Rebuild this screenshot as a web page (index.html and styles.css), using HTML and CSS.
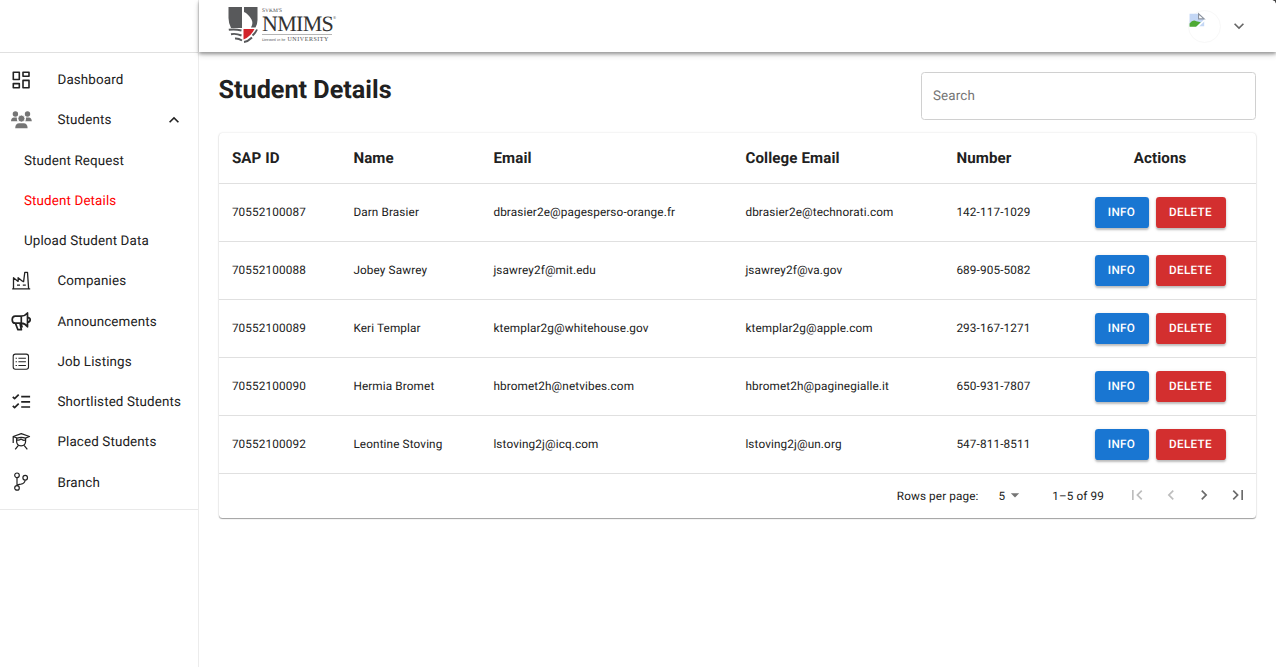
FILE: index.html
```
<!DOCTYPE html>
<html lang="en">
<head>
<meta charset="utf-8">
<title>Student Details</title>
<link rel="stylesheet" href="styles.css">
</head>
<body>
<div class="app">
  <aside class="sidebar">
    <div class="sidebar-head"></div>
    <nav class="nav">
      <a class="nav-item"><svg class="icon" viewBox="0 0 24 24" stroke-width="1.6"><path d="M4.3 4.2h6v7.3h-6zM14 4.2h6v4.1h-6zM4.3 15.6h6v4.1h-6zM14 12.4h6v7.3h-6z"/></svg><span>Dashboard</span></a>
      <a class="nav-item"><svg class="icon icon-grey" viewBox="0 0 24 24"><circle cx="6.4" cy="6" r="2.7"/><circle cx="18.5" cy="6" r="2.7"/><path d="M2 13.3c0-2.500 1.200-3.800 3-3.800h2.800c.2 1.700-.1 2.800.8 3.800zM22.800 13.300c0-2.500-1.200-3.800-3-3.800H17c-.2 1.700.1 2.800-.8 3.800z"/><circle cx="12.4" cy="10.6" r="3.5" stroke="#fff" stroke-width=".8"/><path d="M6.200 20.300c0-3.300 1.600-5 4-5h4.400c2.400 0 4 1.700 4 5z"/></svg><span>Students</span><svg class="expand" viewBox="0 0 24 24"><path d="M12 8l-6 6 1.41 1.41L12 10.83l4.59 4.58L18 14z"/></svg></a>
      <a class="nav-item nav-sub"><span>Student Request</span></a>
      <a class="nav-item nav-sub nav-active"><span>Student Details</span></a>
      <a class="nav-item nav-sub"><span>Upload Student Data</span></a>
      <a class="nav-item"><svg class="icon" viewBox="0 0 24 24" stroke-width="1.3"><path d="M3.200 19.800h18M4.500 19.500V8.700l4.600 3.700V8.700l4.700 3.900M13.800 12.600h.8l1.200-9.200h2.700l1.100 16.100M8 16.200h3M13.800 16.200h3"/></svg><span>Companies</span></a>
      <a class="nav-item"><svg class="icon" viewBox="0 0 24 24" stroke-width="1.7"><path d="M12.300 7.200H6.200Q3.200 7.200 3.200 10.700T6.200 14.200h6.100zM12.300 7.200Q16 7 18.500 4v13.800q-2.500-3.400-6.200-3.600M18.800 8.300q2.400.5 2.400 2.500t-2.400 2.500M6.500 14.400l2.400 6.300h3.500l-1.400-6.300M12 14.400l1.200 4.200"/></svg><span>Announcements</span></a>
      <a class="nav-item"><svg class="icon" viewBox="0 0 24 24" stroke-width="1.1"><rect x="4.200" y="4.100" width="15.300" height="15.200" rx="2.200"/><path d="M9.400 8.200h7.500M9.400 11.800h7.500M9.400 15.500h7.500"/><path d="M6.600 8.200h1.300M6.600 11.800h1.300M6.600 15.500h1.300"/></svg><span>Job Listings</span></a>
      <a class="nav-item"><svg class="icon" viewBox="0 0 24 24" stroke-width="1.7"><path d="M12.200 6.600h8.900M12.200 11.800h8.900M12.200 17h8.900M3.800 6.800l1.800 1.800 4.100-4M3.800 15.800l1.800 1.800 4.100-4"/></svg><span>Shortlisted Students</span></a>
      <a class="nav-item"><svg class="icon" viewBox="0 0 24 24" stroke-width="1.250"><path d="M4.200 13V6.500L12.300 3.600l8.200 2.900-4.100 1.600q-4.100-1.400-8.200 0L4.200 6.500M7.600 8.100v3.200q0 4.400 4.500 4.600 4.500-.2 4.500-4.600V8.100M8 9.900q2 .8 4-.8 2.300 1.800 4.600.8M6.200 19.400l3-3.700M18.300 19.400l-3-3.700"/></svg><span>Placed Students</span></a>
      <a class="nav-item"><svg class="icon" viewBox="0 0 24 24" stroke-width="1.200"><circle cx="8" cy="5.300" r="2.300"/><circle cx="8" cy="17.900" r="2.300"/><circle cx="16.200" cy="7.700" r="2.300"/><path d="M8 7.600v8M16.200 10q-.6 3.800-4.300 4.200-3.500.2-3.900 1.800"/></svg><span>Branch</span></a>
    </nav>
  </aside>
  <div class="page">
    <header class="topbar">
      <div class="logo">
        <svg class="crest" viewBox="0 0 32 38"><path d="M1.500 1H15v21H4Q1.500 17 1.500 12z" fill="#58595b"/><path d="M17 1h13.500v13q0 4-2 7.500h-4.500q2.500-4 .5-8Q21 7.500 17 6z" fill="#58595b"/><path d="M16.500 23H27.500q-3.500 7.500-11 10.500z" fill="#d2232a"/><path d="M1.800 23.800q6-1 12.700.7M4 28.200q5-1 10.500 1.300M8 32.500q3.500-.3 7 2M17 36q4-.5 8-4.500M25.500 29.500q3-2.500 4.500-6" fill="none" stroke="#58595b" stroke-width="1.900"/></svg>
        <div class="wordmark"><span class="logo-top">SVKM'S</span><span class="logo-name">NMIMS<sup class="logo-reg">®</sup></span><span class="logo-tag"><small class="logo-deemed">Deemed to be</small> UNIVERSITY</span></div>
      </div>
      <div class="account">
        <div class="avatar"><svg class="broken" viewBox="0 0 16 16"><path d="M.5 2.500h8l5 5v6H.5z" fill="#c4d7f5"/><path d="M8.500 2.500v4.500h5z" fill="#fff" stroke="#8b93a0"/><path d="M.5 14V11q3-4 6-2l4 1-4 4z" fill="#4eaa35"/><path d="M7 14.500l7-6.500" stroke="#fff" stroke-width="1.500"/></svg></div>
        <svg class="chevron" viewBox="0 0 24 24"><path d="M7.410 8.590L12 13.170l4.590-4.580L18 10l-6 6-6-6z"/></svg>
      </div>
      <i class="corner"></i>
    </header>
    <main class="content">
      <div class="heading"><h1 class="title">Student Details</h1><input class="search" type="text" placeholder="Search"></div>
      <section class="card">
        <div class="row row-head"><span>SAP ID</span><span>Name</span><span>Email</span><span>College Email</span><span>Number</span><span class="actions">Actions</span></div>
        <div class="row"><span>70552100087</span><span>Darn Brasier</span><span>dbrasier2e@pagesperso-orange.fr</span><span>dbrasier2e@technorati.com</span><span>142-117-1029</span><span class="actions"><button class="btn info">INFO</button><button class="btn delete">DELETE</button></span></div>
        <div class="row"><span>70552100088</span><span>Jobey Sawrey</span><span>jsawrey2f@mit.edu</span><span>jsawrey2f@va.gov</span><span>689-905-5082</span><span class="actions"><button class="btn info">INFO</button><button class="btn delete">DELETE</button></span></div>
        <div class="row"><span>70552100089</span><span>Keri Templar</span><span>ktemplar2g@whitehouse.gov</span><span>ktemplar2g@apple.com</span><span>293-167-1271</span><span class="actions"><button class="btn info">INFO</button><button class="btn delete">DELETE</button></span></div>
        <div class="row"><span>70552100090</span><span>Hermia Bromet</span><span>hbromet2h@netvibes.com</span><span>hbromet2h@paginegialle.it</span><span>650-931-7807</span><span class="actions"><button class="btn info">INFO</button><button class="btn delete">DELETE</button></span></div>
        <div class="row"><span>70552100092</span><span>Leontine Stoving</span><span>lstoving2j@icq.com</span><span>lstoving2j@un.org</span><span>547-811-8511</span><span class="actions"><button class="btn info">INFO</button><button class="btn delete">DELETE</button></span></div>
        <div class="pager">
          <span class="per-page">Rows per page:</span><span class="size">5</span><svg class="caret" viewBox="0 0 24 24"><path d="M7 10l5 5 5-5z"/></svg><span class="range">1–5 of 99</span>
          <svg class="page-btn off" viewBox="0 0 24 24"><path d="M18.410 16.590L13.820 12l4.590-4.590L17 6l-6 6 6 6zM6 6h2v12H6z"/></svg>
          <svg class="page-btn off" viewBox="0 0 24 24"><path d="M15.410 7.410L14 6l-6 6 6 6 1.410-1.410L10.830 12z"/></svg>
          <svg class="page-btn" viewBox="0 0 24 24"><path d="M8.590 16.590L13.170 12 8.590 7.410 10 6l6 6-6 6z"/></svg>
          <svg class="page-btn" viewBox="0 0 24 24"><path d="M5.590 7.410L10.180 12l-4.590 4.590L7 18l6-6-6-6zM16 6h2v12h-2z"/></svg>
        </div>
      </section>
    </main>
  </div>
</div>
</body>
</html>
```

FILE: styles.css
```
* { box-sizing: border-box; }
body { margin: 0; font-family: Roboto, "Liberation Sans", sans-serif; color: #212121; background: #fff; text-rendering: geometricPrecision; }
.app { display: flex; height: 667px; overflow: hidden; }
.sidebar { width: 198.5px; flex: none; border-right: 1px solid #ececec; }
.sidebar-head { height: 53px; border-bottom: 1px solid #e0e0e0; }
.nav { padding: 6.7px 0; border-bottom: 1px solid #e9e9e9; }
.nav-item { display: flex; align-items: center; height: 40.25px; padding-left: 9px; font-size: 13.4px; letter-spacing: .126px; white-space: nowrap; }
.nav-item > span { padding-top: 1.4px; }
.nav-sub { padding-left: 24px; }
.nav-active { color: #f00; }
.icon { width: 24px; height: 24px; margin-right: 24.5px; flex: none; fill: none; stroke: #222; stroke-linejoin: round; }
.icon-grey { fill: #757575; stroke: none; }
.expand { width: 20px; height: 20px; margin-left: auto; margin-right: 13.5px; fill: #222; }
.page { flex: 1; min-width: 0; }
.topbar { position: relative; display: flex; justify-content: space-between; height: 52px; padding: 0 27px 0 28.5px; box-shadow: 0 2px 3px rgba(0,0,0,.3), 0 3px 6px rgba(0,0,0,.16); }
.logo { display: flex; gap: 3px; padding-top: 6px; }
.crest { width: 32px; height: 38px; }
.wordmark { display: flex; flex-direction: column; padding-top: 2px; font-family: "Liberation Serif", serif; color: #4d4d4f; white-space: nowrap; }
.logo-top { font-size: 5.5px; line-height: 6px; }
.logo-name { display: flex; font-size: 22px; line-height: 20px; color: #333; letter-spacing: -.7px; border-bottom: 1px solid #b5b5b5; height: 21px; width: 70px; }
.logo-reg { font-size: 4px; line-height: 8px; }
.logo-tag { margin-top: 1px; font-size: 6px; line-height: 7px; letter-spacing: .55px; }
.logo-deemed { font-size: 4px; letter-spacing: .1px; }
.account { display: flex; align-items: center; gap: 8px; }
.avatar { width: 33px; height: 33px; border-radius: 50%; border: 1px solid #f8f8f8; }
.broken { display: block; width: 18px; height: 18px; }
.chevron { width: 20px; height: 20px; fill: #666; }
.corner { position: absolute; top: 0; right: 0; width: 4px; height: 4px; background: radial-gradient(circle at 0 100%, transparent 3.5px, #444 4px); }
.content { padding: 20px 20px 0; }
.heading { display: flex; justify-content: space-between; height: 60.5px; }
.title { margin: 2px 0 0; font-size: 25.2px; font-weight: 700; line-height: 34px; }
.search { width: 335px; height: 47.5px; padding: 1px 11px 0; border: 1px solid #d0d0d0; border-radius: 3.5px; font: 13.4px Roboto, sans-serif; letter-spacing: .126px; text-rendering: geometricPrecision; }
.search::placeholder { color: #757575; opacity: 1; }
.card { height: 385.5px; border-radius: 3.5px; box-shadow: 0 1px 1px rgba(0,0,0,.35), 0 0 2px rgba(0,0,0,.16); }
.row { display: grid; grid-template-columns: 121.5px 140px 252px 211px 121px 1fr; align-items: center; height: 58.1px; border-bottom: 1px solid #e0e0e0; font-size: 11.75px; letter-spacing: .126px; }
.row > span { padding-left: 13.4px; white-space: nowrap; }
.row-head { height: 51px; font-size: 15.1px; font-weight: 700; letter-spacing: .12px; }
.row > .actions { display: flex; justify-content: center; gap: 7px; padding: 0; }
.btn { height: 31px; padding: 0; border: 0; border-radius: 3.35px; color: #fff; font: 500 11.73px Roboto, sans-serif; letter-spacing: .335px; text-rendering: geometricPrecision; box-shadow: 0 2px 2px rgba(0,0,0,.2), 0 1px 4px rgba(0,0,0,.12); }
.info { width: 54px; background: #1976d2; }
.delete { width: 70px; background: #d32f2f; }
.pager { display: flex; align-items: center; justify-content: flex-end; height: 43px; padding-right: 8.5px; font-size: 11.73px; letter-spacing: .126px; }
.pager > span { padding-top: 1px; }
.size { margin-left: 20px; }
.caret { width: 20px; height: 20px; fill: #757575; }
.range { margin: 0 23px 0 27px; }
.page-btn { width: 20px; height: 20px; margin-left: 13.5px; fill: #6b6b6b; }
.range + .page-btn { margin-left: 0; }
.off { fill: #bdbdbd; }
```
